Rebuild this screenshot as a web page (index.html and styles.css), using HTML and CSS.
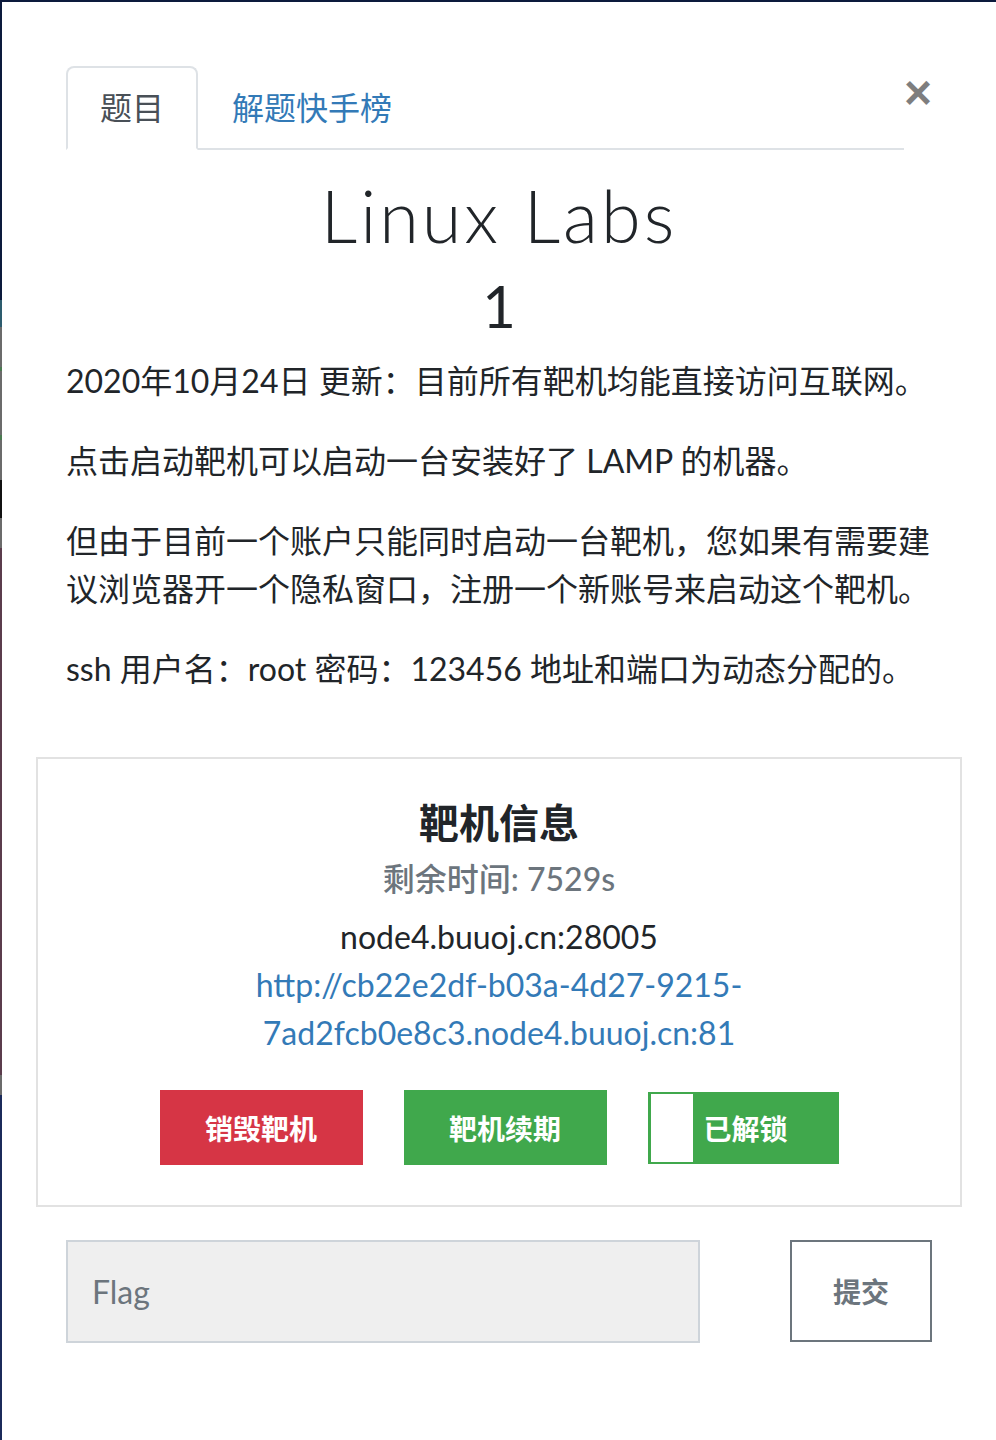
FILE: index.html
```html
<!DOCTYPE html>
<html lang="zh-CN">
<head>
<meta charset="utf-8">
<title>Linux Labs</title>
<link rel="stylesheet" href="styles.css">
</head>
<body>
<div class="modal">
  <div class="modal-header">
    <ul class="nav-tabs">
      <li><a class="tab active">题目</a></li>
      <li><a class="tab">解题快手榜</a></li>
    </ul>
    <button class="close" aria-label="Close">×</button>
  </div>
  <div class="modal-body">
    <h1 class="chal-name">Linux Labs</h1>
    <h3 class="chal-value">1</h3>
    <div class="chal-desc">
      <p>2020年10月24日 更新：目前所有靶机均能直接访问互联网。</p>
      <p>点击启动靶机可以启动一台安装好了 LAMP 的机器。</p>
      <p>但由于目前一个账户只能同时启动一台靶机，您如果有需要建议浏览器开一个隐私窗口，注册一个新账号来启动这个靶机。</p>
      <p>ssh 用户名：root 密码：123456 地址和端口为动态分配的。</p>
    </div>
    <div class="card">
      <h4 class="card-title">靶机信息</h4>
      <h6 class="card-sub">剩余时间: 7529s</h6>
      <p class="card-text">node4.buuoj.cn:28005<br><a class="card-link">http://cb22e2df-b03a-4d27-9215-7ad2fcb0e8c3.node4.buuoj.cn:81</a></p>
      <div class="actions">
        <button class="btn btn-danger">销毁靶机</button>
        <button class="btn btn-success">靶机续期</button>
        <button class="btn btn-unlock"><span class="knob"></span><span class="label">已解锁</span></button>
      </div>
    </div>
    <div class="flag-row">
      <input class="flag-input" type="text" placeholder="Flag">
      <button class="btn-submit">提交</button>
    </div>
  </div>
</div>
</body>
</html>
```
FILE: styles.css
```css
html, body {
  margin: 0;
  padding: 0;
}
body {
  height: 1440px;
  overflow: hidden;
  font-family: "Lato", "Noto Sans CJK SC", sans-serif;
  color: #212529;
  background: linear-gradient(to bottom,
    #0c1a3c 0px, #0c1a3c 300px,
    #2d5c6e 300px, #2d5c6e 327px,
    #6b6b6b 327px, #6b6b6b 367px,
    #4a7a50 367px, #4a7a50 371px,
    #6b6b6b 371px, #6b6b6b 435px,
    #4a7a50 435px, #4a7a50 440px,
    #6b6b6b 440px, #6b6b6b 480px,
    #111111 480px, #111111 518px,
    #6b6b6b 518px, #6b6b6b 548px,
    #5b3c4c 548px, #5b3c4c 1075px,
    #6b6b6b 1075px, #6b6b6b 1095px,
    #1b2a5a 1095px, #1b2a5a 1440px);
}
.modal {
  margin: 2px 0 0 2px;
  min-height: 1438px;
  background: #fff;
  padding: 64px 64px 0 64px;
  box-sizing: border-box;
}
.modal-header {
  display: flex;
  align-items: flex-start;
}
.nav-tabs {
  flex: 1;
  display: flex;
  list-style: none;
  margin: 0;
  padding: 0;
  border-bottom: 2px solid #dee2e6;
}
.nav-tabs li {
  margin-bottom: -2px;
}
.tab {
  display: block;
  padding: 16px 32px;
  font-size: 32px;
  line-height: 48px;
  color: #337ab7;
  border: 2px solid transparent;
  border-radius: 8px 8px 0 0;
}
.tab.active {
  color: #495057;
  border-color: #dee2e6 #dee2e6 #fff;
  background: #fff;
}
.close {
  margin: 3px 0 0 0;
  padding: 0;
  border: 0;
  background: none;
  font-family: "Liberation Sans", "Helvetica", sans-serif;
  font-size: 48px;
  font-weight: 700;
  line-height: 1;
  color: #000;
  opacity: 0.5;
}
.modal-body {
  padding-top: 22px;
}
.chal-name {
  margin: 0;
  text-align: center;
  font-size: 72px;
  font-weight: 300;
  line-height: 86px;
  letter-spacing: 3px;
}
.chal-value {
  margin: 13px 0 0;
  text-align: center;
  font-size: 58px;
  font-weight: 400;
  line-height: 70px;
}
.chal-desc {
  margin-top: 16px;
}
.chal-desc p {
  margin: 0 0 32px;
  font-size: 32px;
  line-height: 48px;
}
.chal-desc p:last-child {
  margin-bottom: 0;
}
.card {
  margin: 64px -30px 0;
  border: 2px solid #e2e2e2;
  padding: 40px 40px 40px;
  text-align: center;
}
.card-title {
  margin: 0;
  font-size: 40px;
  line-height: 48px;
  font-weight: 700;
}
.card-sub {
  margin: 8px 0 0;
  font-size: 32px;
  line-height: 48px;
  font-weight: 500;
  color: #6c757d;
}
.card-text {
  margin: 10px 0 0;
  font-size: 32px;
  line-height: 48px;
}
.card-link {
  color: #337ab7;
}
.actions {
  margin-top: 33px;
  display: flex;
  justify-content: center;
  gap: 41px;
}
.btn {
  font-family: "Lato", "Noto Sans CJK SC", sans-serif;
  font-size: 28px;
  font-weight: 700;
  color: #fff;
  border: 0;
  border-radius: 0;
  height: 75px;
  padding: 0;
}
.btn-danger {
  width: 203px;
  background: #d63545;
}
.btn-success {
  width: 203px;
  background: #40a84c;
}
.btn-unlock {
  width: 191px;
  height: 72px;
  margin-top: 2px;
  background: #40a84c;
  display: flex;
  align-items: stretch;
  padding: 2px 3px 2px 3px;
  box-sizing: border-box;
}
.btn-unlock .knob {
  width: 42px;
  background: #fff;
}
.btn-unlock .label {
  display: flex;
  align-items: center;
  padding-left: 11px;
}
.flag-row {
  margin-top: 33px;
  display: flex;
  justify-content: space-between;
}
.flag-input {
  width: 634px;
  height: 103px;
  box-sizing: border-box;
  background: #efefef;
  border: 2px solid #ced4da;
  border-radius: 0;
  padding: 0 24px;
  font-family: "Lato", "Noto Sans CJK SC", sans-serif;
  font-size: 32px;
  color: #495057;
  outline: none;
}
.flag-input::placeholder {
  color: #6c757d;
}
.btn-submit {
  width: 142px;
  height: 102px;
  background: #fff;
  border: 2px solid #6c757d;
  border-radius: 0;
  font-family: "Lato", "Noto Sans CJK SC", sans-serif;
  font-size: 28px;
  font-weight: 700;
  color: #6c757d;
  padding: 0;
}
```
